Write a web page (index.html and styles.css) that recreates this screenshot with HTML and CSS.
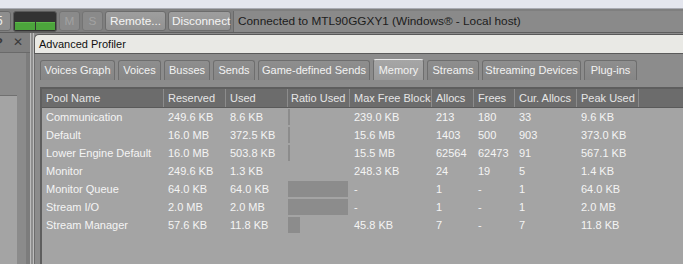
FILE: index.html
```html
<!DOCTYPE html>
<html>
<head>
<meta charset="utf-8">
<link rel="stylesheet" href="styles.css">
</head>
<body>
<div class="app">
  <div class="topstrip"></div>
  <div class="toolbar">
    <span class="clip5">5</span>
    <div class="meter"><span class="lvl"></span><span class="lvl"></span></div>
    <button class="tbtn dis">M</button>
    <button class="tbtn dis">S</button>
    <button class="tbtn wide1">Remote...</button>
    <button class="tbtn wide2">Disconnect</button>
    <div class="status">Connected to MTL90GGXY1 (Windows® - Local host)</div>
  </div>
  <div class="workspace">
    <div class="leftpane">
      <div class="lhead"><span class="q">?</span><span class="x">✕</span></div>
      <div class="lbody">
        <div class="lbox"></div>
        <div class="lside"></div>
      </div>
    </div>
    <div class="splitter"></div>
    <div class="rightpane">
      <div class="rhead">Advanced Profiler</div>
      <div class="rbody">
        <div class="tabs">
          <div class="tab t1">Voices Graph</div>
          <div class="tab t2">Voices</div>
          <div class="tab t3">Busses</div>
          <div class="tab t4">Sends</div>
          <div class="tab t5">Game-defined Sends</div>
          <div class="tab t6 active">Memory</div>
          <div class="tab t7">Streams</div>
          <div class="tab t8">Streaming Devices</div>
          <div class="tab t9">Plug-ins</div>
        </div>
        <div class="table">
          <div class="row head">
            <div class="c c1">Pool Name</div><div class="c c2">Reserved</div><div class="c c3">Used</div><div class="c c4">Ratio Used</div><div class="c c5">Max Free Block</div><div class="c c6">Allocs</div><div class="c c7">Frees</div><div class="c c8">Cur. Allocs</div><div class="c c9">Peak Used</div><div class="c cr"></div>
          </div>
          <div class="row">
            <div class="c c1">Communication</div><div class="c c2">249.6 KB</div><div class="c c3">8.6 KB</div><div class="c c4"><span class="bar" style="width:2px"></span></div><div class="c c5">239.0 KB</div><div class="c c6">213</div><div class="c c7">180</div><div class="c c8">33</div><div class="c c9">9.6 KB</div>
          </div>
          <div class="row">
            <div class="c c1">Default</div><div class="c c2">16.0 MB</div><div class="c c3">372.5 KB</div><div class="c c4"><span class="bar" style="width:2px"></span></div><div class="c c5">15.6 MB</div><div class="c c6">1403</div><div class="c c7">500</div><div class="c c8">903</div><div class="c c9">373.0 KB</div>
          </div>
          <div class="row">
            <div class="c c1">Lower Engine Default</div><div class="c c2">16.0 MB</div><div class="c c3">503.8 KB</div><div class="c c4"><span class="bar" style="width:2px"></span></div><div class="c c5">15.5 MB</div><div class="c c6">62564</div><div class="c c7">62473</div><div class="c c8">91</div><div class="c c9">567.1 KB</div>
          </div>
          <div class="row">
            <div class="c c1">Monitor</div><div class="c c2">249.6 KB</div><div class="c c3">1.3 KB</div><div class="c c4"></div><div class="c c5">248.3 KB</div><div class="c c6">24</div><div class="c c7">19</div><div class="c c8">5</div><div class="c c9">1.4 KB</div>
          </div>
          <div class="row">
            <div class="c c1">Monitor Queue</div><div class="c c2">64.0 KB</div><div class="c c3">64.0 KB</div><div class="c c4"><span class="bar" style="width:60px"></span></div><div class="c c5">-</div><div class="c c6">1</div><div class="c c7">-</div><div class="c c8">1</div><div class="c c9">64.0 KB</div>
          </div>
          <div class="row">
            <div class="c c1">Stream I/O</div><div class="c c2">2.0 MB</div><div class="c c3">2.0 MB</div><div class="c c4"><span class="bar" style="width:60px"></span></div><div class="c c5">-</div><div class="c c6">1</div><div class="c c7">-</div><div class="c c8">1</div><div class="c c9">2.0 MB</div>
          </div>
          <div class="row">
            <div class="c c1">Stream Manager</div><div class="c c2">57.6 KB</div><div class="c c3">11.8 KB</div><div class="c c4"><span class="bar" style="width:12px"></span></div><div class="c c5">45.8 KB</div><div class="c c6">7</div><div class="c c7">-</div><div class="c c8">7</div><div class="c c9">11.8 KB</div>
          </div>
        </div>
      </div>
    </div>
  </div>
</div>
</body>
</html>
```

FILE: styles.css
```css
* { box-sizing: border-box; }
html, body { margin: 0; padding: 0; }
body {
  width: 683px; height: 264px; overflow: hidden;
  font-family: "Liberation Sans", Arial, sans-serif;
  font-size: 11px;
  background: #8c8c8c;
}
.app { display: flex; flex-direction: column; height: 264px; }
.topstrip {
  height: 9px; background: #e4e6ee;
  border-bottom: 1px solid #a9abb3;
}
.toolbar {
  height: 24px; background: #7f7f7f;
  display: flex; align-items: center; gap: 2px;
  border-bottom: 1px solid #5e5e5e;
  padding-top: 1px;
}
.clip5 {
  flex: none;
  width: 18px; margin-left: -7px; height: 20px;
  background: #8e8e8e; border: 1px solid #6a6a6a; border-radius: 3px;
  color: #f0f0f0; font-size: 12px; line-height: 18px; padding-left: 2px;
}
.meter {
  flex: none;
  width: 44px; height: 21px; background: #333333;
  border: 1px solid #5a5a5a; border-radius: 3px;
  display: flex; align-items: flex-end; gap: 1px; padding: 0 1px 1px 1px;
}
.lvl { flex: 1; height: 8px; background: #4ca43c; border-top: 1px solid #5cb84a; }
.tbtn {
  flex: none;
  font-family: inherit; font-size: 11.8px; height: 20px;
  background: linear-gradient(#9e9e9e, #929292);
  border: 1px solid #6c6c6c; border-radius: 3px;
  color: #f4f4f4; padding: 0 3px; margin: 0; white-space: nowrap;
}
.tbtn.dis { width: 21px; background: #8a8a8a; color: #a2a2a2; padding: 0; border-color: #747474; }
.wide1 { width: 61px; }
.wide2 { width: 63px; }
.status {
  height: 21px; flex: 1;
  border-left: 1px solid #6a6a6a;
  padding-left: 4px; line-height: 20px; white-space: nowrap;
  font-size: 11.8px; color: #1c1c1c; background: #8a8a8a;
}
.workspace { display: flex; flex: 1; min-height: 0; }
.leftpane { width: 30px; display: flex; flex-direction: column; flex: none; }
.lhead {
  height: 20px; background: #7f7f7f; position: relative;
  border-bottom: 1px solid #6a6a6a;
  color: #3a3a3a; font-size: 13px; line-height: 19px;
}
.lhead .q { position: absolute; left: -5px; top: 0; font-weight: bold; }
.lhead .x { position: absolute; left: 13px; top: 0; font-size: 12px; }
.lbody { flex: 1; display: flex; background: #8b8b8b; border-right: 4px solid #7c7c7c; }
.lbox { width: 17px; margin-top: 42px; background: #a4a4a4; border-top: 1px solid #707070; }
.lside { flex: 1; }
.splitter {
  width: 4px; flex: none; background: #8e8e8e;
  border-left: 1px solid #bdbdbd; border-right: 1px solid #bdbdbd;
}
.rightpane { flex: 1; display: flex; flex-direction: column; min-width: 0; }
.rhead {
  height: 20px; background: #e9e9e5; color: #111;
  border: 1px solid #5a5a5a; border-right: none;
  border-top-left-radius: 5px;
  padding-left: 4px; line-height: 18px; font-size: 11px;
  margin-top: 1px;
}
.rbody {
  flex: 1; background: #8c8c8c; padding: 5px 0 0 5px;
  border-left: 1px solid #6c6c6c;
  display: flex; flex-direction: column;
}
.tabs { display: flex; gap: 3px; height: 21px; align-items: flex-end; }
.tab {
  flex: none; white-space: nowrap; text-align: center;
  height: 20px; padding: 0; line-height: 19px;
  background: linear-gradient(#8e8e8e, #868686);
  border: 1px solid #6e6e6e; border-bottom: none;
  border-radius: 3px 3px 0 0;
  color: #f2f2f2; font-size: 11px;
}
.t1 { width: 75px; }
.t2 { width: 43px; }
.t3 { width: 46px; }
.t4 { width: 42px; }
.t5 { width: 112px; }
.t6 { width: 51px; }
.t7 { width: 52px; }
.t8 { width: 99px; }
.t9 { width: 53px; }
.tab.active {
  height: 21px; line-height: 20px;
  background: linear-gradient(#a6a6a6, #9a9a9a);
  border-top: 1px solid #e8e8e8;
}
.table {
  margin-top: 7px; flex: 1;
  background: #a4a4a4;
  border-left: 2px solid #5e5e5e; border-top: 2px solid #5e5e5e;
}
.row { display: flex; height: 18px; line-height: 18px; color: #f4f4f4; }
.row.head { background: #6c6c6c; color: #e6e6e6; height: 19px; line-height: 18px; border-bottom: 1px solid #5a5a5a; }
.c { padding-left: 4px; white-space: nowrap; overflow: hidden; flex: none; }
.head .c { border-right: 1px solid #8c8c8c; }
.c1 { width: 122px; padding-left: 4px; }
.c2 { width: 62px; }
.c3 { width: 62px; }
.c4 { width: 62px; padding-left: 0; display: flex; align-items: center; }
.c5 { width: 82px; }
.c6 { width: 42px; }
.c7 { width: 41px; }
.c8 { width: 62px; }
.c9 { width: 62px; }
.cr { flex: 1; }
.head .cr { border-right: none; }
.head .c4 { padding-left: 3px; display: block; }
.bar { display: block; height: 16px; background: #8c8c8c; }
```
